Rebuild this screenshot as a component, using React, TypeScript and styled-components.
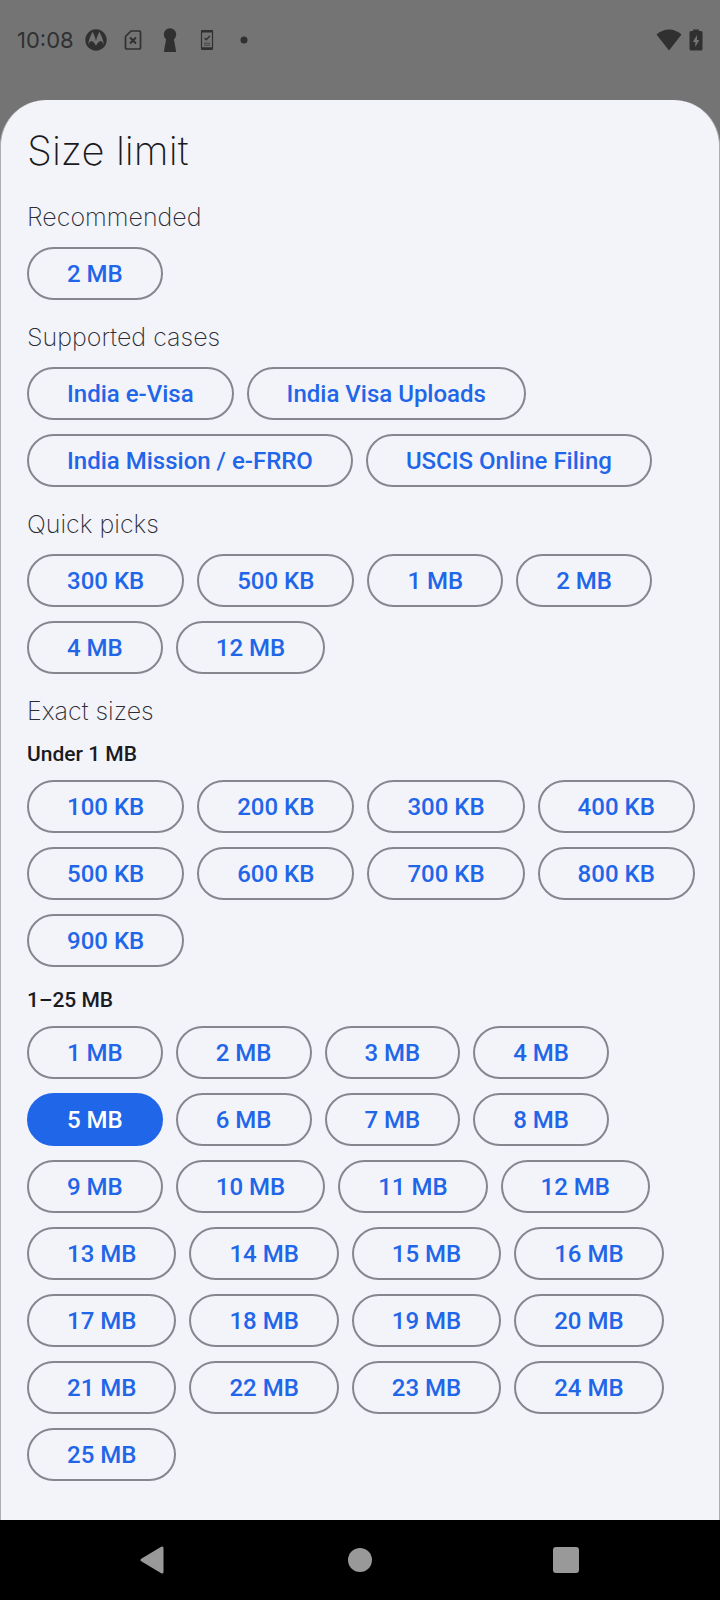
import React, { useState } from "react";
import styled, { createGlobalStyle } from "styled-components";

const GlobalStyle = createGlobalStyle`
  *, *::before, *::after { box-sizing: border-box; }
  body { margin: 0; background: #747475; }
`;

const Screen = styled.div`
  min-height: 100vh;
  display: flex;
  flex-direction: column;
  background: #747475;
  font-family: Roboto, "Liberation Sans", sans-serif;
`;

const StatusBar = styled.header`
  height: 100px;
  padding: 28px 17px 0;
  display: flex;
  justify-content: space-between;
  align-items: flex-start;
  color: #303031;
`;

const StatusGroup = styled.div<{ $gap: number }>`
  display: flex;
  align-items: center;
  gap: ${(p) => p.$gap}px;
  height: 24px;
  svg { display: block; }
`;

const IconSlot = styled.span`
  width: 24px;
  display: flex;
  justify-content: center;
`;

const Clock = styled.time`
  font: 400 22px/24px Inter, sans-serif;
  white-space: nowrap;
`;

const Sheet = styled.main`
  flex: 1;
  padding: 24px 24px 38px 26px;
  border: solid #aeaeb3;
  border-width: 0 1px;
  border-radius: 46px 46px 0 0;
  background: #f3f3fa;
`;

const Title = styled.h1`
  margin: 0 0 24px;
  font: 200 40px/53px Inter, sans-serif;
  color: #1a1b21;
`;

const Section = styled.section`
  & + & { margin-top: 21px; }
`;

const SectionTitle = styled.h2`
  margin: 0 0 13px;
  font: 200 25px/33px Inter, sans-serif;
  color: #2b2d35;
`;

const SizeGroup = styled.div`
  & + & { margin-top: 20px; }
`;

const GroupTitle = styled.h3`
  margin: 0 0 13px;
  font-size: 21px;
  line-height: 26px;
  font-weight: 500;
  color: #1a1b21;
`;

const ChipRow = styled.div`
  display: flex;
  flex-wrap: wrap;
  gap: 14px 13px;
`;

const Chip = styled.button<{ $selected: boolean }>`
  height: 53px;
  padding: 0 38px;
  border: 2px solid ${(p) => (p.$selected ? "#1f66e8" : "#85878e")};
  border-radius: 27px;
  background: ${(p) => (p.$selected ? "#1f66e8" : "transparent")};
  color: ${(p) => (p.$selected ? "#ffffff" : "#1f66e8")};
  font: 500 24px/30px Roboto, sans-serif;
  white-space: nowrap;
  cursor: pointer;
`;

const NavBar = styled.nav`
  height: 80px;
  padding: 0 51px;
  display: flex;
  align-items: center;
  background: #000;
`;

const NavButton = styled.button`
  flex: 1;
  height: 80px;
  padding: 0;
  border: 0;
  display: flex;
  align-items: center;
  justify-content: center;
  background: none;
  color: #999;
`;

const kb = (values: number[]) => values.map((n) => `${n} KB`);
const mb = (values: number[]) => values.map((n) => `${n} MB`);

const recommended = mb([2]);
const cases = ["India e-Visa", "India Visa Uploads", "India Mission / e-FRRO", "USCIS Online Filing"];
const quick = [...kb([300, 500]), ...mb([1, 2, 4, 12])];
const small = kb([100, 200, 300, 400, 500, 600, 700, 800, 900]);
const large = mb(Array.from({ length: 25 }, (_, i) => i + 1));

function StatusIcons() {
  return (
    <StatusGroup $gap={13}>
      <IconSlot>
        <svg width="22" height="22" viewBox="0 0 22 22" aria-hidden="true">
          <circle cx="11" cy="11" r="10.7" fill="currentColor" />
          <path d="M3 15.800C3.800 11 5.600 6.500 7.600 2.800C9.200 6 10.200 8.800 11 12C11.800 8.800 12.800 6 14.400 2.800C16.400 6.500 18.200 11 19 15.800C18.200 13.800 17 12.300 15.600 12C14 12.200 12.200 14 11 16.800C9.800 14 8 12.200 6.400 12C5 12.300 3.800 13.800 3 15.800Z" fill="#747475" />
        </svg>
      </IconSlot>
      <IconSlot>
        <svg width="18" height="22" viewBox="0 0 18 22" aria-hidden="true" fill="none" stroke="currentColor" strokeWidth="1.700">
          <path d="M7 2H15.500Q16.500 2 16.500 3V19Q16.500 20 15.500 20H2.500Q1.500 20 1.500 19V7.500Z" strokeLinejoin="round" />
          <path d="M6 8.500L12 14.500M12 8.500L6 14.500" strokeWidth="1.900" />
        </svg>
      </IconSlot>
      <IconSlot>
        <svg width="14" height="24" viewBox="0 0 14 24" aria-hidden="true" fill="currentColor">
          <circle cx="7" cy="6.500" r="6.200" />
          <path d="M3.500 9H10.500L13.200 24H0.800Z" />
        </svg>
      </IconSlot>
      <IconSlot>
        <svg width="14" height="22" viewBox="0 0 14 22" aria-hidden="true" fill="none" stroke="currentColor">
          <rect x="1.500" y="1.500" width="11" height="19" rx="1.500" strokeWidth="1.200" />
          <path d="M1.200 2.300H12.800M1.200 19.500H12.800" strokeWidth="2.400" />
          <path d="M4.500 9L6.200 10.700L9.800 7" strokeWidth="1.300" />
          <path d="M4 14.200H10.200M4 16.200H10.200" strokeWidth="1" opacity="0.7" />
        </svg>
      </IconSlot>
      <IconSlot>
        <svg width="8" height="8" viewBox="0 0 8 8" aria-hidden="true">
          <circle cx="4" cy="4" r="3.500" fill="currentColor" />
        </svg>
      </IconSlot>
    </StatusGroup>
  );
}

export default function App() {
  const [selected, setSelected] = useState("exact:5 MB");

  const chips = (group: string, labels: string[]) => (
    <ChipRow>
      {labels.map((label) => {
        const id = `${group}:${label}`;
        return (
          <Chip key={id} type="button" $selected={selected === id} aria-pressed={selected === id} onClick={() => setSelected(id)}>
            {label}
          </Chip>
        );
      })}
    </ChipRow>
  );

  return (
    <Screen>
      <GlobalStyle />
      <StatusBar>
        <StatusGroup $gap={10}>
          <Clock>10:08</Clock>
          <StatusIcons />
        </StatusGroup>
        <StatusGroup $gap={7}>
          <svg width="26" height="22" viewBox="0 0 26 22" aria-hidden="true">
            <path d="M0.500 5.500Q13 -4.500 25.500 5.500L13 21.500Z" fill="currentColor" />
          </svg>
          <svg width="14" height="22" viewBox="0 0 14 22" aria-hidden="true">
            <path d="M4 2V0.500H10V2H12Q13.500 2 13.500 3.500V20Q13.500 21.500 12 21.500H2Q0.500 21.500 0.500 20V3.500Q0.500 2 2 2Z" fill="currentColor" />
            <path d="M8 6L3.800 13H6.300V18L10.300 11H8Z" fill="#747475" />
          </svg>
        </StatusGroup>
      </StatusBar>
      <Sheet>
        <Title>Size limit</Title>
        <Section>
          <SectionTitle>Recommended</SectionTitle>
          {chips("recommended", recommended)}
        </Section>
        <Section>
          <SectionTitle>Supported cases</SectionTitle>
          {chips("case", cases)}
        </Section>
        <Section>
          <SectionTitle>Quick picks</SectionTitle>
          {chips("quick", quick)}
        </Section>
        <Section>
          <SectionTitle>Exact sizes</SectionTitle>
          <SizeGroup>
            <GroupTitle>Under 1 MB</GroupTitle>
            {chips("exact", small)}
          </SizeGroup>
          <SizeGroup>
            <GroupTitle>1–25 MB</GroupTitle>
            {chips("exact", large)}
          </SizeGroup>
        </Section>
      </Sheet>
      <NavBar>
        <NavButton type="button" aria-label="Back">
          <svg width="28" height="28" viewBox="0 0 28 28" aria-hidden="true">
            <path d="M22 2V26L2 14Z" fill="currentColor" stroke="currentColor" strokeWidth="3" strokeLinejoin="round" />
          </svg>
        </NavButton>
        <NavButton type="button" aria-label="Home">
          <svg width="24" height="24" viewBox="0 0 24 24" aria-hidden="true">
            <circle cx="12" cy="12" r="12" fill="currentColor" />
          </svg>
        </NavButton>
        <NavButton type="button" aria-label="Recent apps">
          <svg width="26" height="26" viewBox="0 0 26 26" aria-hidden="true">
            <rect width="26" height="26" rx="3" fill="currentColor" />
          </svg>
        </NavButton>
      </NavBar>
    </Screen>
  );
}
